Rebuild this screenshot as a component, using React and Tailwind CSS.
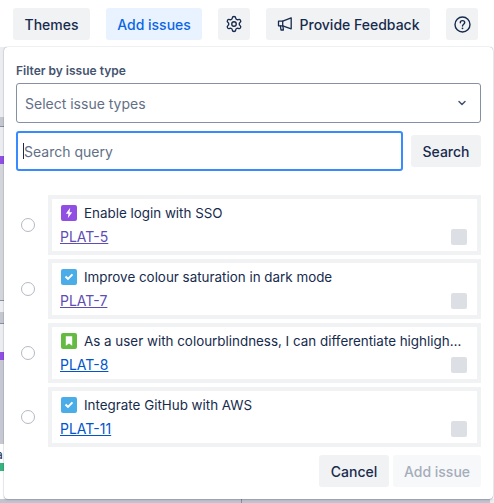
import React from "react";
import { ChevronDown, Settings } from "lucide-react";

const font = "font-['Inter','Noto_Sans',sans-serif]";

const Btn = ({ children, className = "" }) => (
  <button className={`h-8 flex items-center justify-center rounded-[3px] bg-[#F1F2F4] text-[14px] font-medium text-[#172B4D] ${className}`}>
    {children}
  </button>
);

const Megaphone = () => (
  <svg width="16" height="16" viewBox="0 0 16 16" fill="none" stroke="#172B4D" strokeWidth="1.300" strokeLinejoin="round" strokeLinecap="round">
    <path d="M1.500 5.200h4.200L14.200 1.800v11l-8.500-3H1.500z" />
    <path d="M5.700 5.200v4.600" />
    <path d="M3.400 9.800l.6 4.200h2.400L5.900 10" />
  </svg>
);

const Help = () => (
  <svg width="17" height="17" viewBox="0 0 17 17" fill="none">
    <circle cx="8.500" cy="8.500" r="7.500" stroke="#172B4D" strokeWidth="1.400" />
    <path d="M6.300 6.700c0-1.300 1-2.100 2.200-2.100s2.200.8 2.200 2c0 1.700-2.200 1.700-2.200 3.500" stroke="#172B4D" strokeWidth="1.400" strokeLinecap="round" />
    <circle cx="8.500" cy="12.300" r="0.900" fill="#172B4D" />
  </svg>
);

const TypeIcon = ({ type }) => {
  const bg = { story: "bg-[#65BA43]", task: "bg-[#4BADE8]", epic: "bg-[#904EE2]" }[type];
  return (
    <span className={`w-4 h-4 shrink-0 rounded-[2px] flex items-center justify-center ${bg}`}>
      <svg width="16" height="16" viewBox="0 0 16 16" fill="#fff">
        {type === "epic" && <path d="M9.200 2.800 4.800 8.800h2.700L6.800 13.200l4.400-6H8.500z" />}
        {type === "task" && <path d="M3.800 8.200l1.400-1.400 1.800 1.800 3.800-3.900 1.400 1.400L7 11.200z" />}
        {type === "story" && <path d="M4.800 3.200h6.400v9.600L8 10.400l-3.200 2.400z" />}
      </svg>
    </span>
  );
};

const issues = [
  { type: "epic", title: "Enable login with SSO", key: "PLAT-5", visited: true },
  { type: "task", title: "Improve colour saturation in dark mode", key: "PLAT-7", visited: true },
  { type: "story", title: "As a user with colourblindness, I can differentiate highlighted text", key: "PLAT-8" },
  { type: "task", title: "Integrate GitHub with AWS", key: "PLAT-11" },
];

const Issue = ({ type, title, key_, visited }) => (
  <div className="flex items-center">
    <span className="ml-[5px] w-[14px] h-[14px] rounded-full border border-[#B3B9C4] bg-white shrink-0" />
    <div className="ml-[13px] w-[433px] h-[60px] border-4 border-[#F1F2F4] bg-white pl-2 pr-[10px] pt-[6px] flex flex-col">
      <div className="flex items-center gap-[7px] h-4">
        <span className="ml-[1px]"><TypeIcon type={type} /></span>
        <span className="truncate w-[381px] text-[13.4px] leading-5 text-[#172B4D]">{title}</span>
      </div>
      <div className="flex items-start justify-between mt-1">
        <a className={`text-[14px] leading-6 underline ${visited ? "text-[#5E4DB2]" : "text-[#0055CC]"}`}>{key_}</a>
        <span className="mt-1 w-4 h-4 rounded-[2px] bg-[#DCDFE4]" />
      </div>
    </div>
  </div>
);

export default function App() {
  return (
    <div className={`relative w-[494px] h-[503px] overflow-hidden bg-white ${font}`}>
      {/* toolbar */}
      <div className="flex items-center gap-4 pl-[13px] pt-2">
        <Btn className="w-[77px]">Themes</Btn>
        <Btn className="w-[96px] !bg-[#E9F2FF] !text-[#0C66E4]">Add issues</Btn>
        <Btn className="w-8"><Settings size={18} strokeWidth={1.8} /></Btn>
        <Btn className="w-[164px] gap-[7px]"><Megaphone />Provide Feedback</Btn>
        <Btn className="w-8"><Help /></Btn>
      </div>

      {/* page peeking out behind the popover */}
      <div className="absolute left-0 top-[47px] w-2 h-[452px] flex flex-col bg-white">
        <div className="h-[70px] shrink-0 bg-[#ECEDF0]" />
        <div className="h-[9px] shrink-0 bg-[#C5C7CF]" />
        <div className="h-[1px] shrink-0 bg-[#8A8F9B]" />
        <div className="h-[29px] shrink-0 bg-[#ECEDF0]" />
        <div className="h-2 shrink-0 bg-[#904EE2]" />
        <div className="h-[136px] shrink-0 bg-[#D3D5DB]" />
        <div className="h-[1px] shrink-0 bg-[#8A8F9B]" />
        <div className="h-[11px] shrink-0 bg-[#ECEDF0]" />
        <div className="h-[11px] shrink-0 bg-[#C5C7CF]" />
        <div className="h-[1px] shrink-0 bg-[#8A8F9B]" />
        <div className="h-[28px] shrink-0 bg-[#ECEDF0]" />
        <div className="h-2 shrink-0 bg-[#904EE2]" />
        <div className="h-[84px] shrink-0 bg-[#C6C9D2]" />
        <div className="h-[19px] shrink-0 pt-[3px] text-[12px] leading-4 text-[#172B4D] -indent-[4px]">a</div>
        <div className="h-2 shrink-0 bg-[#36B37E]" />
      </div>
      <div className="absolute left-0 right-0 bottom-0 h-1 bg-[#C1C4CF]">
        <div className="absolute left-[241px] top-0 bottom-0 w-[1px] bg-[#8A8F9B]" />
        <div className="absolute right-0 top-0 bottom-0 w-1 bg-[#ECEDF0]" />
      </div>

      {/* popover */}
      <div className="absolute left-[4px] top-[47px] w-[489px] h-[452px] rounded-[4px] bg-white shadow-[0_0_1px_rgba(9,30,66,0.5),0_1px_2px_rgba(9,30,66,0.2)] pl-3 pr-3 pt-4">
        <div className="text-[12px] leading-4 font-semibold text-[#44546F]">Filter by issue type</div>
        <div className="mt-1 w-[465px] h-10 rounded-[3px] border border-[#8590A2] flex items-center justify-between pl-2 pr-3">
          <span className="text-[14px] text-[#626F86]">Select issue types</span>
          <ChevronDown size={12} strokeWidth={3} className="text-[#44546F]" />
        </div>
        <div className="mt-2 flex items-center gap-2">
          <div className="relative w-[387px] h-10 rounded-[3px] border-2 border-[#388BFF] flex items-center pl-[6px]">
            <input
              readOnly
              placeholder="Search query"
              className="w-full bg-transparent outline-none caret-transparent text-[14px] text-[#172B4D] placeholder:text-[#626F86]"
            />
            <span className="absolute left-[5px] top-[10px] w-[1px] h-4 bg-[#172B4D]" />
          </div>
          <Btn className="w-[70px]">Search</Btn>
        </div>
        <div className="mt-6 flex flex-col gap-1">
          {issues.map((i) => (
            <Issue key={i.key} type={i.type} title={i.title} key_={i.key} visited={i.visited} />
          ))}
        </div>
        <div className="mt-2 w-[465px] flex justify-end gap-1">
          <Btn className="w-[70px]">Cancel</Btn>
          <Btn className="w-[88px] !bg-[#F7F8F9] !text-[#A5ADBA]">Add issue</Btn>
        </div>
      </div>
    </div>
  );
}
